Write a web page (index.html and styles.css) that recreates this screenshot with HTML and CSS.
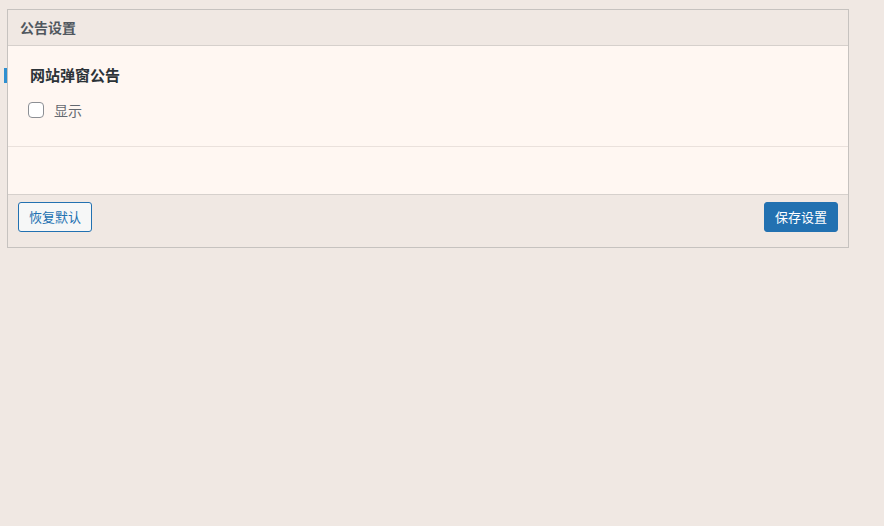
FILE: index.html
```html
<!DOCTYPE html>
<html lang="zh-CN">
<head>
    <meta charset="UTF-8">
    <meta name="viewport" content="width=device-width, initial-scale=1.0">
    <title>公告设置</title>
    <link rel="stylesheet" href="styles.css">
</head>
<body>
    <div class="wrap">
        <div class="panel">
            <div class="panel-header">公告设置</div>
            <div class="panel-body">
                <div class="section">
                    <span class="marker"></span>
                    <h3 class="section-title">网站弹窗公告</h3>
                    <label class="check">
                        <input type="checkbox" id="showNotice">
                        <span>显示</span>
                    </label>
                </div>
                <div class="spacer"></div>
            </div>
            <div class="panel-footer">
                <button type="button" class="button">恢复默认</button>
                <button type="button" class="button primary">保存设置</button>
            </div>
        </div>
    </div>
</body>
</html>
```

FILE: styles.css
```css
body {
    margin: 0;
    background: #f0e8e3;
    font-family: "Noto Sans CJK SC", "Noto Sans", sans-serif;
    color: #3c434a;
}
.wrap {
    padding: 9px 0 0 7px;
}
.panel {
    width: 840px;
    border: 1px solid #c6c2bf;
    background: #f0e8e3;
}
.panel-header {
    height: 35px;
    line-height: 35px;
    padding: 0 12px;
    font-size: 14px;
    font-weight: bold;
    color: #50575e;
    border-bottom: 1px solid #d6d0cc;
}
.panel-body {
    background: #fff7f2;
}
.section {
    position: relative;
    height: 101px;
    padding: 0 22px;
    border-bottom: 1px solid #eae1dc;
    box-sizing: border-box;
}
.marker {
    position: absolute;
    left: -4px;
    top: 22px;
    width: 3px;
    height: 15px;
    background: #2e8fd0;
}
.section-title {
    margin: 0;
    padding-top: 19px;
    font-size: 15px;
    line-height: 20px;
    font-weight: bold;
    color: #2c3338;
}
.check {
    display: flex;
    align-items: center;
    margin-top: 15px;
    margin-left: -2px;
    font-size: 14px;
    color: #646970;
}
.check input {
    appearance: none;
    width: 16px;
    height: 16px;
    margin: 0 10px 0 0;
    border: 1px solid #8c8f94;
    border-radius: 4px;
    background: #fff;
}
.spacer {
    height: 47px;
}
.panel-footer {
    display: flex;
    justify-content: space-between;
    padding: 7px 10px 15px 10px;
    border-top: 1px solid #d6d0cc;
}
.button {
    height: 30px;
    padding: 0 10px 2px;
    border: 1px solid #2271b1;
    border-radius: 3px;
    background: #f6f7f7;
    color: #2271b1;
    font-family: inherit;
    font-size: 13px;
    cursor: pointer;
}
.button.primary {
    background: #2271b1;
    color: #fff;
}
```
